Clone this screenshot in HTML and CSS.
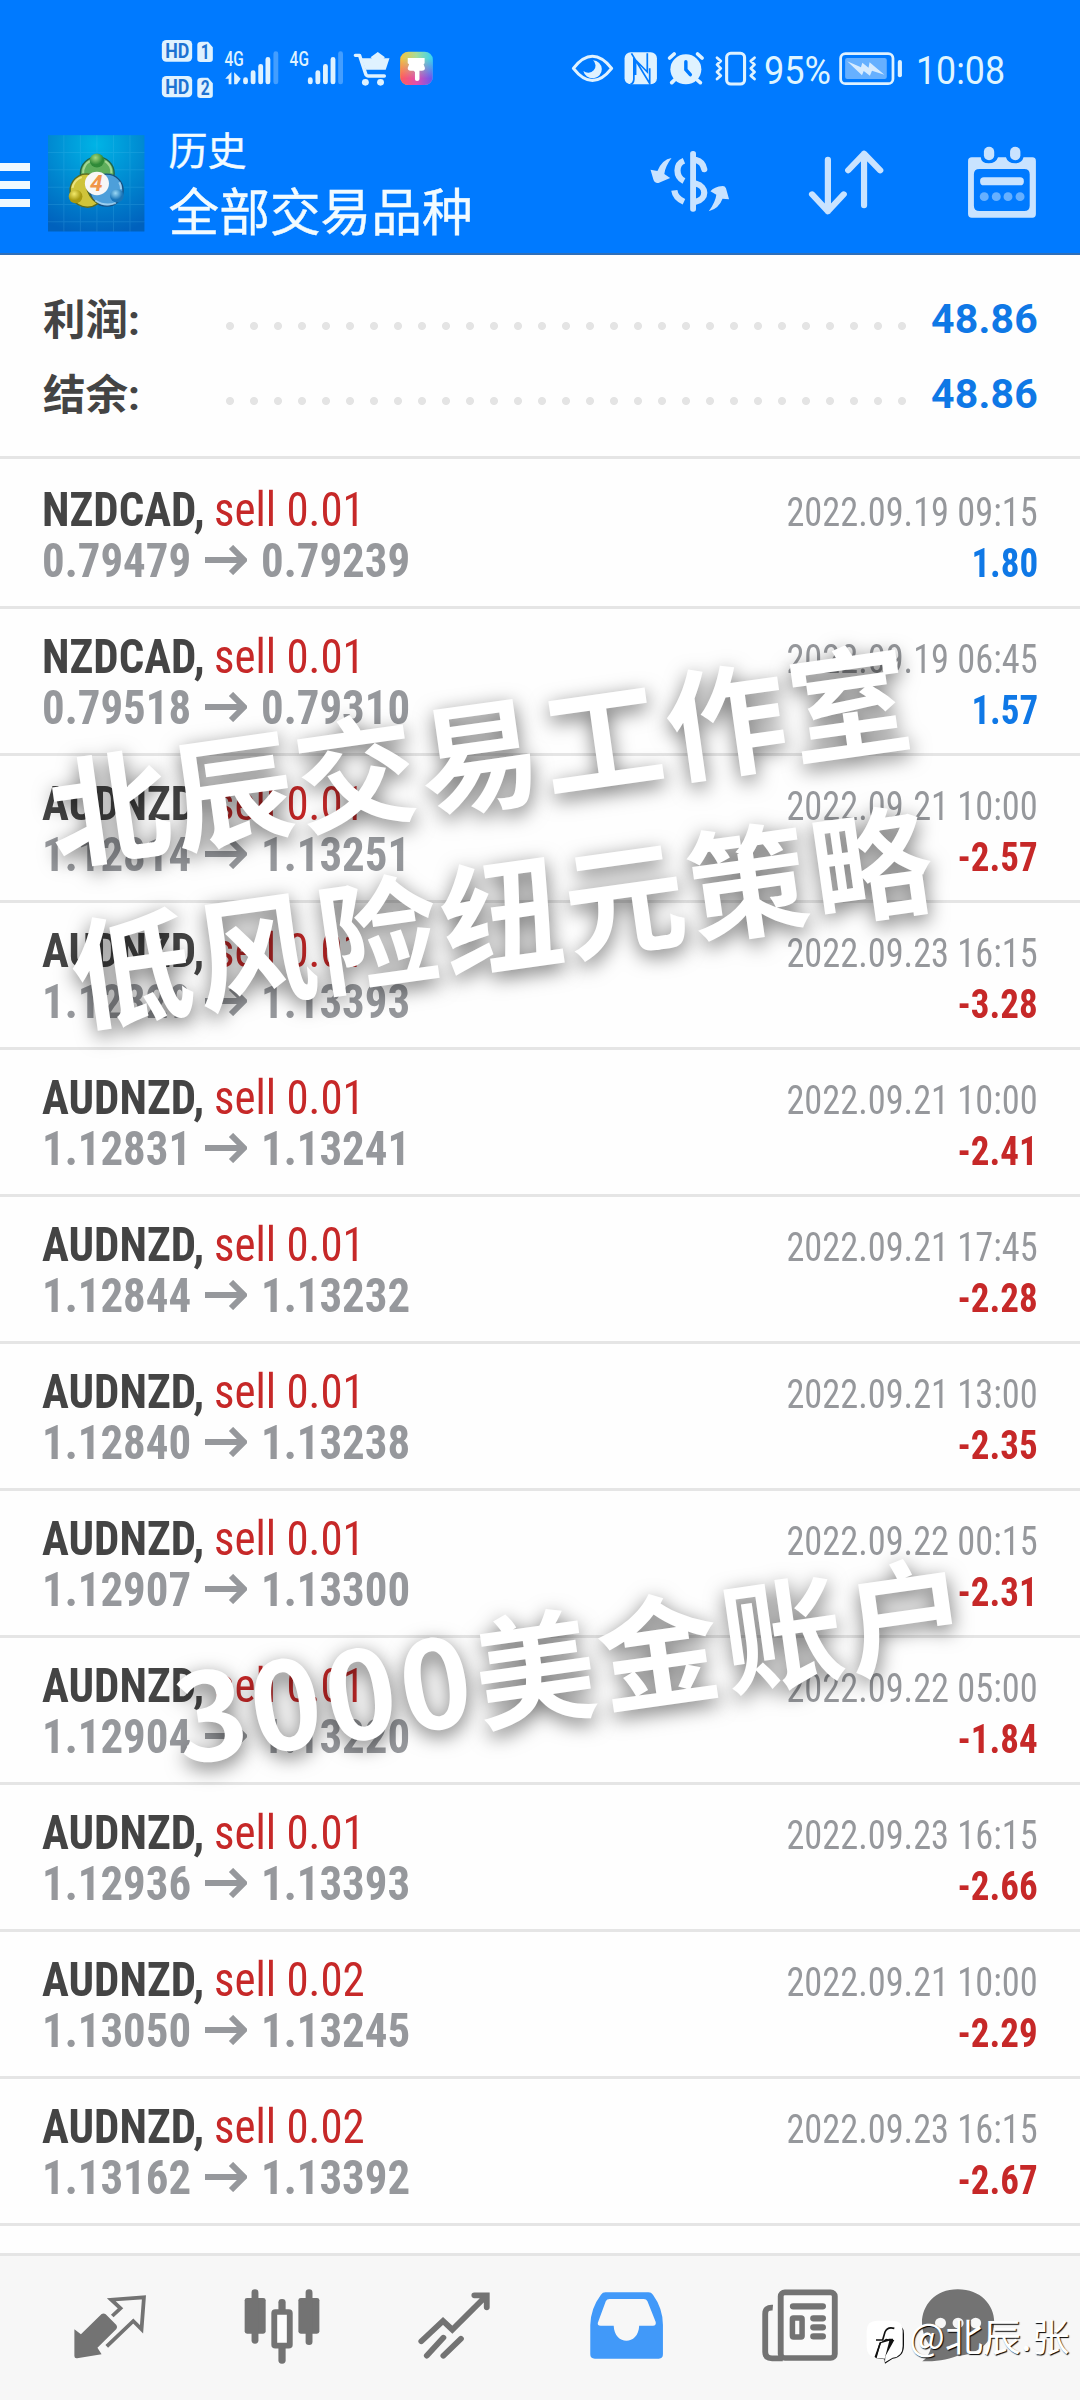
FILE: index.html
```html
<!DOCTYPE html>
<html lang="zh-CN">
<head>
<meta charset="utf-8">
<title>历史</title>
<link rel="stylesheet" href="styles.css">
</head>
<body>
<main class="screen">
  <header class="header">
    <div class="status">
      <svg width="52" height="60" viewBox="162 38 52 60"><g transform="scale(.34437 .33333)">
        <g class="pale"><rect x="470" y="120" width="88" height="65" rx="13"/><rect x="470" y="228" width="88" height="64" rx="13"/>
        <path d="M586 125H604L618 142V178Q618 186 609 186H582Q573 186 573 178V134Q573 125 586 125ZM586 233H604L618 250V286Q618 294 609 294H582Q573 294 573 286V242Q573 233 586 233Z"/></g>
        <g class="cut" font-size="58"><text x="480" y="173" textLength="70" lengthAdjust="spacingAndGlyphs">HD</text><text x="480" y="281" textLength="70" lengthAdjust="spacingAndGlyphs">HD</text><text x="583" y="176" textLength="26" lengthAdjust="spacingAndGlyphs">1</text><text x="583" y="284" textLength="26" lengthAdjust="spacingAndGlyphs">2</text></g>
      </g></svg>
      <svg width="55" height="60" viewBox="224 38 55 60"><g transform="scale(.34437 .33333)">
        <text class="net" x="652" y="197" textLength="56" lengthAdjust="spacingAndGlyphs">4G</text>
        <path class="pale" d="M654 236L672 216V253H664V236ZM680 217L699 236L688 253H680Z"/>
        <g class="bars"><path d="M713 239V246M735 218V246M757 199V246M778 178V246"/><path opacity=".3" d="M801 161V246"/></g>
      </g></svg>
      <svg width="55" height="60" viewBox="289 38 55 60"><g transform="scale(.34437 .33333)">
        <text class="net" x="841" y="197" textLength="56" lengthAdjust="spacingAndGlyphs">4G</text>
        <g class="bars"><path d="M901 239V246M923 218V246M945 199V246M967 178V246"/><path opacity=".3" d="M989 161V246"/></g>
      </g></svg>
      <svg width="36" height="60" viewBox="354 38 36 60"><g transform="scale(.34437 .33333)">
        <path class="pale" d="M1050 175H1080L1076 172L1097 156L1118 172L1114 175H1131L1120 209H1062Z"/>
        <path class="line" stroke-width="10" d="M1032 166H1044L1062 222Q1064 228 1070 228H1116"/>
        <circle class="pale" cx="1061" cy="247" r="10"/><circle class="pale" cx="1105" cy="247" r="10"/>
      </g></svg>
      <svg width="34" height="60" viewBox="400 38 34 60"><defs><linearGradient id="th" x1="0" y1="0" x2="1" y2="0"><stop offset="0" stop-color="#f9c23c"/><stop offset=".5" stop-color="#a6dc9a"/><stop offset="1" stop-color="#35d3f3"/></linearGradient><linearGradient id="tb" x1="0" y1="0" x2="1" y2="0"><stop offset="0" stop-color="#ff5a5a"/><stop offset=".5" stop-color="#e04fae"/><stop offset="1" stop-color="#6558f2"/></linearGradient><linearGradient id="tm" x1="0" y1="0" x2="0" y2="1"><stop offset=".2" stop-color="#000"/><stop offset=".8" stop-color="#fff"/></linearGradient><mask id="mk" maskContentUnits="objectBoundingBox"><rect width="1" height="1" fill="url(#tm)"/></mask></defs><g transform="scale(.34437 .33333)">
        <rect x="1162" y="155" width="95" height="100" rx="24" fill="url(#th)"/><rect x="1162" y="155" width="95" height="100" rx="24" fill="url(#tb)" mask="url(#mk)"/>
        <path fill="#fff" d="M1184 174H1233V190L1230 193L1234 204Q1234 212 1225 212H1218V238Q1218 243 1211 243Q1205 243 1205 238V216L1201 212H1192Q1184 212 1184 204L1188 193L1184 190Z"/>
      </g></svg>
      <span class="grow"></span>
      <svg width="42" height="60" viewBox="32 38 42 60"><g transform="scale(.34437 .33333)">
        <path class="line" stroke-width="9" d="M97 205Q152 133 208 205Q152 278 97 205Z"/><path class="pale" d="M154 181A27 27 0 1 1 126 213A18 18 0 0 0 154 181Z"/>
      </g></svg>
      <svg width="34" height="60" viewBox="84.500 38 34 60"><g transform="scale(.34437 .33333)">
        <rect class="pale" x="247" y="157" width="94" height="96" rx="18"/><path class="slit" d="M267 160L320 250V205M274 174V238Q273 250 264 253M313 160V216L279 180V225"/>
      </g></svg>
      <svg width="37" height="60" viewBox="128.500 38 37 60"><g transform="scale(.34437 .33333)">
        <circle class="pale" cx="425" cy="208" r="45"/><path class="line" stroke-width="11" d="M378 174L391 162M472 174L459 162M392 240L384 248M458 240L467 248"/><path class="cutline" d="M425 185V209L438 224"/>
      </g></svg>
      <svg width="42" height="60" viewBox="175 38 42 60"><g transform="scale(.34437 .33333)">
        <rect class="line" stroke-width="9" x="542" y="160" width="52" height="92" rx="12"/><path class="line" stroke-width="8" d="M514 173L525 183L514 194L525 205L514 216L525 227L514 237M623 173L612 183L623 194L612 205L623 216L612 227L623 237"/>
      </g></svg>
      <svg class="pct" width="68" height="60" viewBox="224 38 68 60"><text x="225" y="83.500" textLength="67" lengthAdjust="spacingAndGlyphs">95%</text></svg>
      <svg class="bat" width="64" height="60" viewBox="299 38 64 60"><g transform="scale(.34437 .33333)">
        <rect class="line" stroke-width="8" x="873" y="161" width="152" height="90" rx="14"/><rect x="886" y="174" width="121" height="63" rx="6" fill="#66b0ff"/><path class="line" stroke-width="12" d="M1045 186V226"/><path fill="#d6ebff" d="M892 184L932 202L936 188L954 203L957 187L1000 224L964 212L958 227L940 213L935 226Z"/>
      </g></svg>
      <svg class="time" width="90" height="60" viewBox="376 38 90 60"><text x="376" y="83.500" textLength="89" lengthAdjust="spacingAndGlyphs">10:08</text></svg>
    </div>
    <div class="bar">
      <div class="burger"><i></i><i></i><i></i></div>
      <svg class="app" width="97" height="97" viewBox="47.500 134.500 97 97"><defs><radialGradient id="bg" cx=".5" cy=".1" r=".95"><stop offset="0" stop-color="#00b4e6"/><stop offset="1" stop-color="#0061bd"/></radialGradient><radialGradient id="gg" cx=".4" cy=".3"><stop offset="0" stop-color="#a6d880"/><stop offset="1" stop-color="#2f8a38"/></radialGradient><radialGradient id="yy" cx=".4" cy=".3"><stop offset="0" stop-color="#f3e96a"/><stop offset="1" stop-color="#a89a10"/></radialGradient><radialGradient id="bb" cx=".4" cy=".3"><stop offset="0" stop-color="#9ad8f5"/><stop offset="1" stop-color="#1a75b8"/></radialGradient></defs><g transform="scale(.34437 .33333)">
        <rect x="138" y="404" width="280" height="289" fill="url(#bg)"/>
        <path d="M184 404V693M232 404V693M280 404V693M328 404V693M376 404V693M138 456H418M138 508H418M138 560H418M138 612H418M138 664H418" stroke="#5cc8f5" stroke-opacity=".18" stroke-width="3"/>
        <g fill="#5fae5c" stroke="#22634a" stroke-width="4"><circle cx="281" cy="518" r="49"/></g>
        <g fill="#4d9fda" stroke="#174f80" stroke-width="4"><circle cx="308" cy="569" r="48"/></g>
        <g fill="#cfc43a" stroke="#5a6a20" stroke-width="4"><path d="M250 520A50 50 0 1 0 282 610Q254 590 248 552Q250 532 262 522Z"/></g>
        <g fill="none" stroke-width="6" stroke-opacity=".65"><path d="M240 518A42 42 0 0 1 262 480M322 518A42 42 0 0 0 304 482" stroke="#c6eab0"/><path d="M209 562A43 43 0 0 1 236 530" stroke="#fbf6a6"/><path d="M345 545A43 43 0 0 1 350 566M275 600Q305 620 335 607" stroke="#c4e8fa"/></g>
        <circle cx="280" cy="480" r="21" fill="url(#gg)"/><circle cx="218" cy="588" r="20" fill="url(#yy)"/><circle cx="338" cy="586" r="20" fill="url(#bb)"/><circle cx="280" cy="549" r="35" fill="#f7f7f7"/>
        <text class="four" x="260" y="572">4</text>
      </g></svg>
      <div class="titles"><span class="t1">历史</span><span class="t2">全部交易品种</span></div>
      <div class="actions">
        <svg width="80" height="74" viewBox="110 146 80 74"><g transform="scale(.34437 .33333)">
          <g fill="#c9e3ff"><path d="M382 474Q355 478 341 513L321 509L329 538Q333 551 344 549L378 534L361 522Q363 500 382 474ZM490 634Q520 625 530 596L549 598L540 565Q537 558 531 558Q505 560 495 574L512 584Q510 605 490 634Z"/><rect x="436" y="453" width="17" height="182" rx="8"/></g>
          <path fill="none" stroke="#c9e3ff" stroke-width="18" d="M418 482C393 492 393 530 418 543M390 571Q393 594 418 605"/><path fill="none" stroke="#c9e3ff" stroke-width="18" stroke-linecap="round" d="M453 480Q473 485 477 508M453 551C485 560 485 596 453 605"/>
        </g></svg>
        <svg width="80" height="74" viewBox="266 146 80 74"><path transform="scale(.34437 .33333)" fill="none" stroke="#c9e3ff" stroke-width="18" stroke-linecap="round" stroke-linejoin="round" d="M836 479V634M790 583L836 634L882 583M941 616V461M895 511L941 461L988 511"/></svg>
        <svg width="80" height="74" viewBox="422 146 80 74"><g transform="scale(.34437 .33333)">
          <path fill="#c9e3ff" fill-rule="evenodd" d="M1254 472H1280Q1281 490 1303 490Q1324 490 1330 472H1353Q1358 490 1380 490Q1400 490 1404 472H1430Q1440 472 1440 483V642Q1440 653 1430 653H1254Q1243 653 1243 642V483Q1243 472 1254 472ZM1276 507Q1260 507 1260 523V617Q1260 633 1276 633H1406Q1422 633 1422 617V523Q1422 507 1406 507Z"/>
          <g fill="#c9e3ff"><rect x="1289" y="440" width="30" height="41" rx="15"/><rect x="1365" y="440" width="30" height="41" rx="15"/><rect x="1278" y="532" width="127" height="24" rx="11"/></g>
          <g fill="#66b0ff"><circle cx="1290" cy="590" r="13"/><circle cx="1325" cy="590" r="13"/><circle cx="1359" cy="590" r="13"/><circle cx="1394" cy="590" r="13"/></g>
        </g></svg>
      </div>
    </div>
  </header>
  <section class="summary">
    <div class="sum"><b>利润:</b><i class="dots"></i><strong>48.86</strong></div>
    <div class="sum"><b>结余:</b><i class="dots"></i><strong>48.86</strong></div>
  </section>
  <section class="list" id="list"></section>
  <nav class="nav">
    <svg width="80" height="80" viewBox="70 85 80 80"><g transform="scale(.34437 .33333)"><path fill="#737373" d="M216 388L235 403L295 342Q301 338 307 343L338 375Q342 381 338 387L283 443L295 463L224 475Q216 476 216 468Z"/><path fill="none" stroke="#737373" stroke-width="11" d="M326 348L350 325L323 299L418 292L411 388L387 363L310 439"/></g></svg>
    <svg width="80" height="80" viewBox="241.500 85 80 80"><g transform="scale(.34437 .33333)"><g fill="#737373"><rect x="709" y="294" width="61" height="107" rx="7"/><rect x="865" y="294" width="61" height="107" rx="7"/><rect x="729" y="268" width="20" height="163" rx="10"/><rect x="886" y="268" width="20" height="167" rx="10"/><rect x="807" y="297" width="21" height="50" rx="10"/><rect x="807" y="430" width="21" height="61" rx="10"/></g><rect x="795" y="336" width="45" height="101" rx="3" fill="#fdfdfd" stroke="#737373" stroke-width="17"/></g></svg>
    <svg width="80" height="80" viewBox="413.500 85 80 80"><path transform="scale(.34437 .33333)" fill="none" stroke="#737373" stroke-width="17" stroke-linecap="round" d="M1222 424L1285 363L1312 389L1408 290M1376 286H1412V322M1238 467L1286 413M1286 467L1337 416"/></svg>
    <svg width="80" height="80" viewBox="46 85 80 80"><g transform="scale(.34437 .33333)"><path fill="#4199f9" d="M190 277H315Q323 277 328 284Q357 325 357 375V463Q357 476 345 476H159Q146 476 146 463V375Q147 325 177 284Q182 277 190 277Z"/><path fill="#f7f7f7" d="M202 297H301Q309 297 312 304L336 366Q338 377 328 377H288C286 437 216 437 214 377H176Q166 377 168 368L191 304Q194 297 202 297Z"/></g></svg>
    <svg width="80" height="80" viewBox="218 85 80 80"><g transform="scale(.34437 .33333)"><rect x="699" y="277" width="157" height="197" rx="12" fill="#fafafa" stroke="#737373" stroke-width="17"/><path fill="none" stroke="#737373" stroke-width="17" d="M676 323Q654 321 654 342V456Q654 475 674 475H705"/><path fill="none" stroke="#737373" stroke-width="19" stroke-linecap="round" d="M735 319H821M794 355H821M794 382H821M794 409H821"/><rect x="733" y="354" width="28" height="57" rx="3" fill="none" stroke="#737373" stroke-width="16"/></g></svg>
    <svg class="chat" width="80" height="80" viewBox="376 85 80 80"><g transform="scale(.34437 .33333)"><path fill="#737373" d="M1213 268C1280 268 1319 315 1319 367C1319 430 1264 467 1213 467C1180 480 1150 484 1110 484Q1130 470 1136 440C1080 375 1115 268 1213 268Z"/><g fill="#f7f7f7"><circle cx="1163" cy="369" r="16"/><circle cx="1214" cy="369" r="16"/><circle cx="1265" cy="369" r="16"/></g></g></svg>
  </nav>
  <div class="mark m1">北辰交易工作室</div>
  <div class="mark m2">低风险纽元策略</div>
  <div class="mark m3">3000美金账户</div>
  <div class="sign">
    <svg width="40" height="48" viewBox="16 38 40 48"><g transform="scale(.33333)"><path fill="#111" d="M75 127H130Q162 133 162 162V195Q162 232 128 236L105 251L103 238L76 234Z"/><path fill="#fff" d="M82 122H128Q158 122 158 152V198Q158 230 128 233L105 247L106 229L133 180L108 176L88 190L76 233Q50 228 50 200V152Q50 122 82 122Z"/><path fill="#fff" d="M92 190L80 234L104 236L118 182Z"/><path fill="none" stroke="#111" stroke-width="5" d="M133 145Q112 139 105 156L98 180H78M116 179H129M92 186L76 232"/></g></svg>
    <span>@北辰.张</span>
  </div>
</main>
<script src="app.js"></script>
</body>
</html>
```
FILE: app.js
```js
const trades = [
  ["NZDCAD", "0.01", "0.79479", "0.79239", "2022.09.19 09:15", "1.80"],
  ["NZDCAD", "0.01", "0.79518", "0.79310", "2022.09.19 06:45", "1.57"],
  ["AUDNZD", "0.01", "1.12814", "1.13251", "2022.09.21 10:00", "-2.57"],
  ["AUDNZD", "0.01", "1.12829", "1.13393", "2022.09.23 16:15", "-3.28"],
  ["AUDNZD", "0.01", "1.12831", "1.13241", "2022.09.21 10:00", "-2.41"],
  ["AUDNZD", "0.01", "1.12844", "1.13232", "2022.09.21 17:45", "-2.28"],
  ["AUDNZD", "0.01", "1.12840", "1.13238", "2022.09.21 13:00", "-2.35"],
  ["AUDNZD", "0.01", "1.12907", "1.13300", "2022.09.22 00:15", "-2.31"],
  ["AUDNZD", "0.01", "1.12904", "1.13220", "2022.09.22 05:00", "-1.84"],
  ["AUDNZD", "0.01", "1.12936", "1.13393", "2022.09.23 16:15", "-2.66"],
  ["AUDNZD", "0.02", "1.13050", "1.13245", "2022.09.21 10:00", "-2.29"],
  ["AUDNZD", "0.02", "1.13162", "1.13392", "2022.09.23 16:15", "-2.67"]
];
const arrow = '<svg class="arrow" width="42" height="30" viewBox="0 0 42 30"><path d="M0 15H39M26 2L39 15L26 28" fill="none" stroke="#96989c" stroke-width="6"/></svg>';
document.getElementById("list").innerHTML = trades.map(([sym, vol, open, close, date, profit]) => `
  <article class="row">
    <div class="line1"><span class="sym">${sym},</span><span class="side">sell ${vol}</span><time>${date}</time></div>
    <div class="line2"><span class="price">${open}</span>${arrow}<span class="price">${close}</span><span class="profit ${profit[0] === "-" ? "neg" : "pos"}">${profit}</span></div>
  </article>`).join("") + '<article class="row"><div class="line1"><span class="sym"></span><span class="side">sell</span></div></article>';
```
FILE: styles.css
```css
* { box-sizing: border-box; }
body { margin: 0; background: #fefefe; font-family: Roboto, "Noto Sans CJK SC", sans-serif; }
svg { display: block; flex: none; }
.screen { position: relative; width: 1080px; height: 2400px; overflow: hidden; display: flex; flex-direction: column; }
.header { height: 255px; background: #007aff; border-bottom: 2px solid #2f6fb8; flex: none; }
.status { height: 98px; padding: 38px 75px 0 162px; display: flex; gap: 10px; }
.status svg { overflow: visible; }
.grow { flex: 1; }
.pale { fill: #dff2ff; }
.line { fill: none; stroke: #dff2ff; stroke-linecap: round; stroke-linejoin: round; }
.cut { fill: #1d72d2; font-weight: 700; }
.net { fill: #dff2ff; font-size: 58px; font-weight: 500; }
.bars { stroke: #dff2ff; stroke-width: 14px; stroke-linecap: round; }
.slit { fill: none; stroke: #007aff; stroke-width: 5px; }
.cutline { fill: none; stroke: #007aff; stroke-width: 10px; stroke-linecap: round; }
.pct text, .time text { fill: #dff5ff; font-size: 38px; }
.pct { margin-left: -4px; }
.bat { margin-left: -2px; }
.time { margin-left: 3px; margin-right: -1px; }
.bar { display: flex; padding-top: 36.500px; height: 157px; align-items: flex-start; }
.burger { width: 30px; margin: 28px 17.500px 0 0; display: flex; flex-direction: column; gap: 10px; }
.burger i { height: 8px; background: #f0f9ff; }
.four { fill: #f0954a; font-size: 66px; font-weight: 700; font-style: italic; }
.titles { color: #f2fbff; margin: -11px 0 0 24px; display: flex; flex-direction: column; }
.t1, .t2 { -webkit-text-stroke: .4px #f2fbff; }
.t1 { font-size: 39px; line-height: 57px; }
.t2 { font-size: 50.700px; line-height: 65px; }
.actions { margin: 11.500px 38px 0 auto; display: flex; gap: 76px; }
.summary { height: 204px; flex: none; border-bottom: 3px solid #e5e5e5; padding: 28px 43px 0; }
.sum { height: 75px; display: flex; align-items: center; }
.sum b { width: 175px; font-size: 42.500px; line-height: 60px; color: #444; margin-top: 0; }
.dots { width: 696px; height: 8px; margin-top: 10px; background: radial-gradient(circle, #e4e4e4 3.600px, transparent 4.400px) 0 0 / 24px 8px; }
.sum strong { margin: -3px 0 0 auto; color: #0f78e6; font-size: 41px; letter-spacing: .2px; margin-right: -1px; }
.list { height: 1794px; flex: none; overflow: hidden; padding-top: 3px; }
.row { height: 147px; border-bottom: 3px solid #e5e5e5; padding: 21.500px 42px 0 42px; font-size: 48px; font-stretch: 75%; font-family: "Roboto Condensed", Roboto, sans-serif; }
.line1, .line2 { display: flex; align-items: baseline; height: 51px; line-height: 51px; white-space: nowrap; }
.sym, .side, .price { transform: scaleX(.935); transform-origin: 0 50%; }
.sym { font-weight: 700; color: #444; width: 172px; }
.side { color: #c62828; }
.row time { margin-left: auto; font-size: 40px; color: #96989c; transform: scaleX(.908); transform-origin: 100% 50%; }
.price { font-weight: 700; color: #96989c; width: 148px; }
.arrow { margin: 0 14px 0 15px; align-self: center; }
.profit { margin-left: auto; font-size: 40px; font-weight: 700; transform: scaleX(.925); transform-origin: 100% 50%; }
.pos { color: #0f78e6; }
.neg { color: #c62828; }
.nav { height: 147px; flex: none; background: #f7f7f7; border-top: 3px solid #e5e5e5; padding: 29px 0 0 70px; display: flex; gap: 92px; }
.chat { margin-left: -14px; }
.mark { position: absolute; white-space: nowrap; color: #fff; font: 700 121px/1 "Noto Sans CJK SC", sans-serif; letter-spacing: 3.500px; transform: translate(-50%, -50%) rotate(-8deg); text-shadow: 0 6px 20px rgba(0,0,0,.55); }
.m1 { left: 480px; top: 749px; }
.m2 { left: 502px; top: 910px; }
.m3 { left: 572px; top: 1657px; letter-spacing: 4.100px; }
.sign { position: absolute; left: 866px; top: 2318px; display: flex; align-items: flex-start; }
.sign span { font: 400 38px/44px "Noto Sans CJK SC", sans-serif; color: #fff; text-shadow: 1px 1px 1px #000; margin: -5px 0 0 3px; }
```
